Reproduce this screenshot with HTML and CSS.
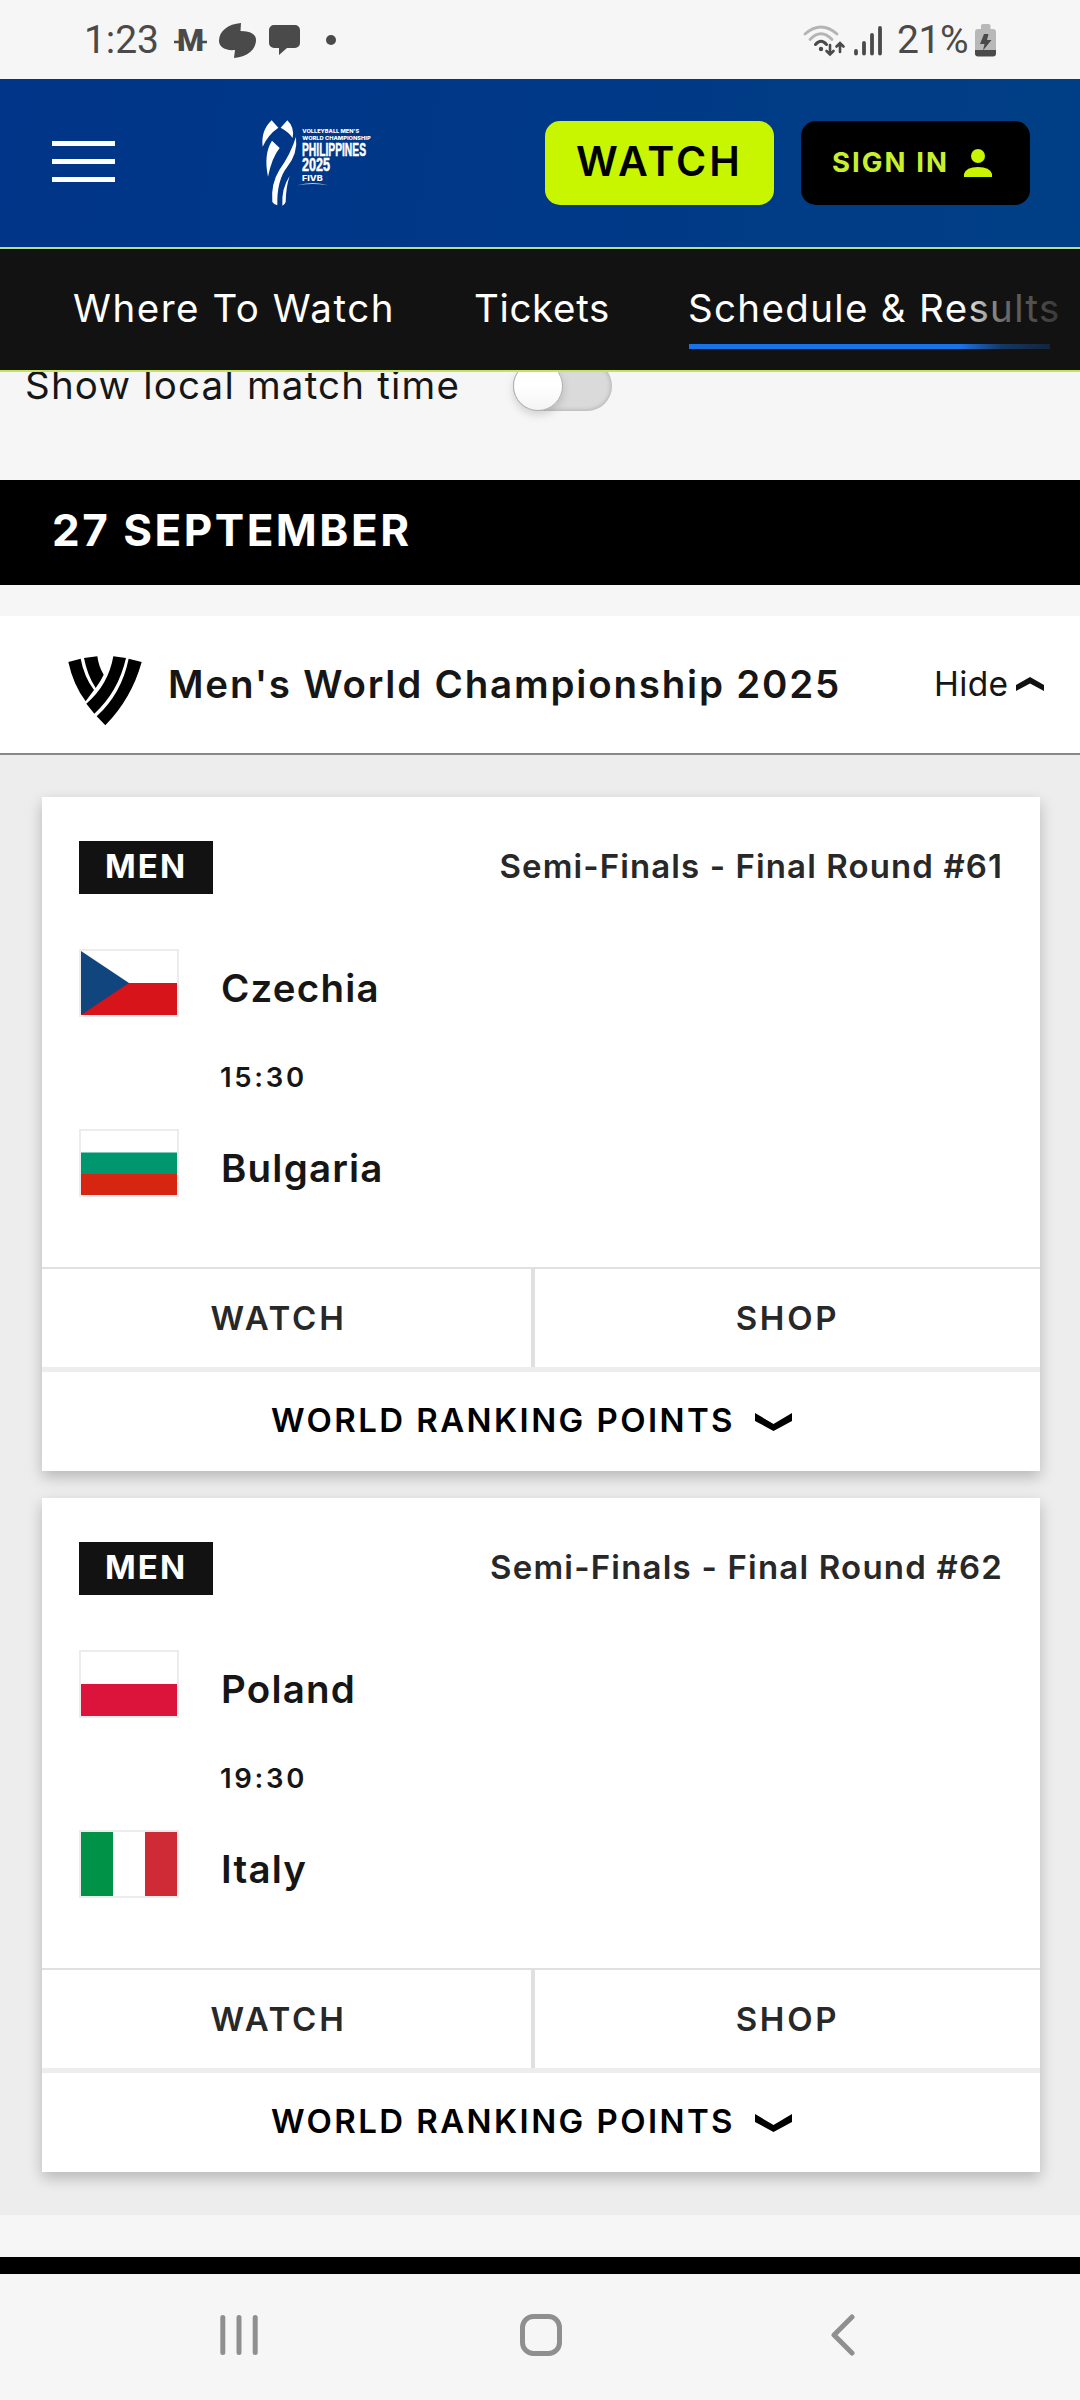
FILE: index.html
```html
<!DOCTYPE html>
<html lang="en">
<head>
<meta charset="utf-8">
<title>Schedule &amp; Results</title>
<link rel="stylesheet" href="styles.css">
</head>
<body>
<div class="status-bar">
  <span class="clock">1:23</span>
  <svg class="status-left" viewBox="172 15 170 48" width="170" height="48">
    <text x="177" y="50" class="mark-m" textLength="27" lengthAdjust="spacingAndGlyphs">M</text>
    <path d="M174 41h7M200 41h7" stroke="#4a4a4a" stroke-width="2.4"/>
    <g fill="#4a4a4a">
      <path d="M241 22 240.500 30C252 30 256 34 256 39C256 48 248 56 234 57L235 49C224 50 219 45 219 40C219 30 228 23 241 22Z"/>
      <path d="M274 24h21a5 5 0 0 1 5 5v13a5 5 0 0 1-5 5h-8l-8 7v-7h-5a5 5 0 0 1-5-5v-13a5 5 0 0 1 5-5Z"/>
      <circle cx="331" cy="39" r="5"/>
    </g>
  </svg>
  <svg class="status-signal" viewBox="800 15 90 48" width="90" height="48" fill="none" stroke-linecap="round">
    <path d="M805 33Q821 19 837 33M810 38.500Q821 27 832 38.500" stroke="#b4b4b4" stroke-width="2.800"/>
    <path d="M815.500 43.500Q821 37 826.500 43.500" stroke="#4a4a4a" stroke-width="3"/>
    <circle cx="821" cy="48" r="2.200" fill="#4a4a4a"/>
    <path d="M830 44V53M826.500 50 830 53.500 833.500 50M840 51V42.500M836.500 45.500 840 42 843.500 45.500" stroke="#4a4a4a" stroke-width="2.600"/>
    <path d="M856 50V52.500M864 42V52.500M872 34V52.500M880 27V52.500" stroke="#4a4a4a" stroke-width="3.800"/>
  </svg>
  <span class="battery-level">21%</span>
  <svg class="battery" viewBox="974 22 24 34" width="24" height="34">
    <path d="M981 28V24.500Q981 23 983 23H988.500Q990.500 23 990.500 24.500V28H993Q996 28 996 31V50H975V31Q975 28 978 28Z" fill="#b8b8b8"/>
    <path d="M975 49H996V52.500Q996 55.500 993 55.500H978Q975 55.500 975 52.500Z" fill="#4a4a4a"/>
    <path d="M984 33H988.500L987 39H991.500L983 49.500 984.500 43H980Z" fill="#4a4a4a"/>
  </svg>
</div>

<header class="site-header">
  <div class="menu"><i></i><i></i><i></i></div>
  <svg class="event-logo" viewBox="0 0 450 330" width="150" height="110" fill="#fff">
    <path d="M95 31 115 53Q84 74 68 110Q62 62 95 31Z"/>
    <path d="M142 31 122 53Q146 66 158 84Q164 52 142 31Z"/>
    <path d="M96 92 119 114Q96 142 84 200Q70 132 96 92Z"/>
    <path d="M168 80Q174 130 142 170Q110 210 112 286Q102 284 97 276Q92 222 118 180Q152 132 168 80Z"/>
    <path d="M149 198Q138 230 137 276Q134 285 127 287Q124 235 149 198Z"/>
    <text x="187" y="68" class="logo-wide" font-size="15" textLength="171" lengthAdjust="spacingAndGlyphs">VOLLEYBALL MEN'S</text>
    <text x="187" y="89" class="logo-wide" font-size="15" textLength="205" lengthAdjust="spacingAndGlyphs">WORLD CHAMPIONSHIP</text>
    <text x="186" y="137" class="logo-bold" textLength="192" lengthAdjust="spacingAndGlyphs">PHILIPPINES</text>
    <text x="186" y="183" class="logo-bold" textLength="84" lengthAdjust="spacingAndGlyphs">2025</text>
    <text x="186" y="214" class="logo-wide" font-size="22" textLength="62" lengthAdjust="spacingAndGlyphs">FIVB</text>
    <path d="M172 226Q218 214 265 226Q218 218 172 226Z"/>
  </svg>
  <a class="btn btn-watch">WATCH</a>
  <a class="btn btn-signin">SIGN IN
    <svg viewBox="0 0 28 28" width="28" height="28" fill="#c8f500"><circle cx="14" cy="7" r="7"/><path d="M0 28V25Q2 18 14 18Q26 18 28 25V28Z"/></svg>
  </a>
</header>

<nav class="tabs">
  <a class="tab tab-where">Where To Watch</a>
  <a class="tab tab-tickets">Tickets</a>
  <a class="tab tab-schedule">Schedule &amp; Results</a>
</nav>

<section class="local-time">
  <div class="local-row">
    <span>Show local match time</span>
    <div class="toggle"><i></i></div>
  </div>
</section>

<h2 class="day">27 SEPTEMBER</h2>

<div class="competition">
  <svg viewBox="0 0 270 300" width="90" height="100">
    <path d="M25 66 62 56Q72 110 102 150L77 184Q40 135 25 66Z"/>
    <path d="M72 54 112 49Q116 80 131 104Q122 124 107 144Q82 106 72 54Z"/>
    <path d="M160 49 198 54Q175 155 103 221L79 191Q145 135 160 49Z"/>
    <path d="M206 56 245 66Q215 175 136 256L110 229Q185 160 206 56Z"/>
  </svg>
  <h3>Men's World Championship 2025</h3>
  <a class="hide">Hide
    <svg viewBox="0 0 28 14" width="28" height="14"><path d="M0 8 14 0 28 8V14L14 6.500 0 14Z" fill="#111"/></svg>
  </a>
</div>

<main class="matches">
  <article class="card">
    <div class="card-top"><span class="badge">MEN</span><span class="round">Semi-Finals - Final Round #61</span></div>
    <div class="team"><svg class="flag" viewBox="0 0 96 64" width="96" height="64"><path fill="#fff" d="M0 0h96v64H0z"/><path fill="#d7141a" d="M0 32h96v32H0z"/><path fill="#11457e" d="M0 0 48 32 0 64z"/></svg><span>Czechia</span></div>
    <div class="time">15:30</div>
    <div class="team"><svg class="flag" viewBox="0 0 96 64" width="96" height="64"><path fill="#fff" d="M0 0h96v22H0z"/><path fill="#00966e" d="M0 21.500h96v21.500H0z"/><path fill="#d62612" d="M0 43h96v21H0z"/></svg><span>Bulgaria</span></div>
    <div class="actions"><a class="watch">WATCH</a><a>SHOP</a></div>
    <a class="ranking">WORLD RANKING POINTS
      <svg viewBox="0 0 37 18" width="37" height="18"><path d="M0 0 18.500 11 37 0V8L18.500 18 0 8Z"/></svg>
    </a>
  </article>
  <article class="card">
    <div class="card-top"><span class="badge">MEN</span><span class="round round-wide">Semi-Finals - Final Round #62</span></div>
    <div class="team"><svg class="flag" viewBox="0 0 96 64" width="96" height="64"><path fill="#fff" d="M0 0h96v32H0z"/><path fill="#dc143c" d="M0 32h96v32H0z"/></svg><span>Poland</span></div>
    <div class="time">19:30</div>
    <div class="team"><svg class="flag" viewBox="0 0 96 64" width="96" height="64"><path fill="#fff" d="M0 0h96v64H0z"/><path fill="#009246" d="M0 0h32v64H0z"/><path fill="#ce2b37" d="M64 0h32v64H64z"/></svg><span>Italy</span></div>
    <div class="actions"><a class="watch">WATCH</a><a>SHOP</a></div>
    <a class="ranking">WORLD RANKING POINTS
      <svg viewBox="0 0 37 18" width="37" height="18"><path d="M0 0 18.500 11 37 0V8L18.500 18 0 8Z"/></svg>
    </a>
  </article>
</main>
<div class="next-day"></div>

<footer class="system-nav">
  <svg viewBox="0 0 38 40" width="38" height="40"><path d="M2.800 2.500V37.500M19 2.500V37.500M35.200 2.500V37.500"/></svg>
  <svg viewBox="0 0 42 42" width="42" height="42"><rect x="2.500" y="2.500" width="37" height="37" rx="11"/></svg>
  <svg viewBox="0 0 24 42" width="24" height="42"><path d="M21 3 3 21 21 39"/></svg>
</footer>
</body>
</html>
```
FILE: styles.css
```css
* { box-sizing: border-box; margin: 0; padding: 0; }

body {
  width: 1080px;
  height: 2400px;
  overflow: hidden;
  background: #f6f6f6;
  color: #161616;
  font-family: Inter, "Liberation Sans", sans-serif;
}

svg { display: block; flex: none; }
a { color: inherit; text-decoration: none; white-space: nowrap; }

/* phone status bar */
.status-bar {
  display: flex;
  align-items: center;
  height: 79px;
  padding-left: 84px;
  font: 400 39px/78px Roboto, sans-serif;
  color: #4a4a4a;
}
.clock { width: 88px; letter-spacing: -0.1px; }
.status-left { margin-right: 458px; }
.battery-level { width: 84px; padding-left: 7px; letter-spacing: -0.4px; }
.mark-m { font: 900 31px Roboto, sans-serif; fill: #4a4a4a; }

/* site header */
.site-header {
  display: flex;
  align-items: center;
  height: 168px;
  padding-left: 52px;
  background: linear-gradient(100deg, #003589, #003a87 60%, #003f86);
}
.menu { display: flex; flex-direction: column; gap: 13px; width: 63px; margin-right: 125px; padding-bottom: 3px; }
.menu i { height: 5px; background: #fff; }
.event-logo { margin: 4px 155px 0 0; overflow: visible; }
.logo-wide { font-family: Inter, sans-serif; font-weight: 800; }
.logo-bold { font: 700 53px "Liberation Sans", sans-serif; stroke: #fff; stroke-width: 1.5px; }
.btn {
  display: flex;
  align-items: center;
  width: 229px;
  height: 84px;
  border-radius: 15px;
}
.btn-watch {
  padding: 0 0 4px 31px;
  margin-right: 27px;
  background: #c8f500;
  color: #000;
  font-size: 41px;
  font-weight: 600;
  letter-spacing: 3px;
}
.btn-signin {
  padding: 0 0 3px 31px;
  background: #000;
  color: #c9f02c;
  font-size: 27.5px;
  font-weight: 700;
  letter-spacing: 2.07px;
}
.btn-signin svg { margin: 3px 0 0 15px; }

/* section tabs */
.tabs {
  position: relative;
  display: flex;
  height: 125px;
  padding-left: 73px;
  border-top: 2px solid #b5e08a;
  border-bottom: 2px solid #c5e45a;
  background: #121212;
  overflow: hidden;
  color: #fff;
  font-size: 38.5px;
  line-height: 118px;
}
.tab { flex: none; }
.tab-where { width: 401px; letter-spacing: 1.53px; }
.tab-tickets { width: 215px; letter-spacing: 0.65px; }
.tab-schedule {
  width: 361px;
  letter-spacing: 1.33px;
  text-indent: -1px;
  background: linear-gradient(#1973e8, #1973e8) 0 95px / 361px 5px no-repeat;
}
.tabs::after {
  content: "";
  position: absolute;
  top: 0;
  right: 0;
  width: 120px;
  height: 121px;
  background: linear-gradient(90deg, rgba(18,18,18,0), rgba(18,18,18,.62) 35%, rgba(18,18,18,.85) 85%, #121212);
}

.local-time { height: 108px; overflow: hidden; }
.local-row {
  display: flex;
  align-items: center;
  height: 50px;
  margin-top: -11px;
  padding-left: 25px;
  font-size: 38.5px;
  letter-spacing: 1.2px;
}
.local-row span { width: 488px; line-height: 46px; padding-bottom: 3px; }
.toggle {
  width: 99px;
  height: 50px;
  border-radius: 25px;
  background: #dadada;
  box-shadow: inset 0 0 5px rgba(0,0,0,.25);
}
.toggle i {
  display: block;
  width: 50px;
  height: 50px;
  border: 1px solid #b0b0b0;
  border-radius: 25px;
  background: linear-gradient(#fff 50%, #f4f4f4);
  box-shadow: 0 4px 8px rgba(0,0,0,.15);
}

.day {
  height: 105px;
  padding-left: 52px;
  background: #000;
  color: #fff;
  font-size: 44px;
  font-weight: 700;
  line-height: 100px;
  letter-spacing: 2.5px;
}

.competition {
  display: flex;
  align-items: center;
  height: 139px;
  margin-top: 31px;
  padding-left: 60px;
  border-bottom: 2px solid #888;
  background: #fff;
}
.competition > svg { margin-top: 11px; }
.competition h3 {
  width: 784px;
  padding: 0 0 2px 18px;
  font-size: 38.5px;
  font-weight: 600;
  letter-spacing: 1.8px;
  white-space: nowrap;
}
.hide {
  display: flex;
  align-items: center;
  padding-bottom: 2px;
  font-size: 33.5px;
  letter-spacing: 0.33px;
}
.hide svg { margin-left: 8px; }

/* match list */
.matches {
  display: flex;
  flex-direction: column;
  gap: 27px;
  height: 1460px;
  padding: 42px 40px 0 42px;
  background: #ededed;
}
.card {
  height: 674px;
  background: #fff;
  box-shadow: 0 6px 14px rgba(0,0,0,.23);
}
.card-top {
  display: flex;
  justify-content: space-between;
  height: 152px;
  padding: 44px 37px 0;
  font-size: 33px;
}
.badge {
  width: 134px;
  height: 53px;
  padding-left: 26px;
  background: #121212;
  color: #fff;
  font-weight: 700;
  line-height: 50px;
  letter-spacing: 2.11px;
}
.round { color: #282828; font-weight: 600; line-height: 50px; letter-spacing: 1.1px; }
.round-wide { letter-spacing: 1.2px; }
.team {
  display: flex;
  height: 68px;
  padding-left: 37px;
  font-size: 38.5px;
  font-weight: 600;
  line-height: 78px;
  letter-spacing: 1.2px;
}
.flag { width: 100px; height: 68px; margin-right: 42px; border: 2px solid #ececec; }
.time {
  height: 112px;
  padding-left: 178px;
  font-size: 27.5px;
  font-weight: 600;
  line-height: 120px;
  letter-spacing: 2.7px;
}
.actions {
  display: flex;
  height: 105px;
  margin-top: 70px;
  border-top: 2px solid #e0e0e0;
  border-bottom: 5px solid #ededed;
  color: #282828;
  font-size: 33px;
  font-weight: 600;
  line-height: 98px;
  letter-spacing: 2.75px;
  text-align: center;
}
.actions a { flex: 1; }
.actions .watch { flex: 0 0 493px; padding-right: 16px; border-right: 4px solid #e0e0e0; }
.ranking {
  display: flex;
  align-items: center;
  height: 99px;
  padding: 0 0 3px 229px;
  color: #000;
  font-size: 33px;
  font-weight: 600;
  letter-spacing: 2.4px;
}
.ranking svg { margin: 4px 0 0 20px; }

.next-day { height: 17px; margin-top: 42px; background: #000; }

/* phone navigation bar */
.system-nav {
  display: flex;
  align-items: center;
  height: 122px;
  padding-left: 220px;
  fill: none;
  stroke: #8f8f8f;
  stroke-width: 5;
  stroke-linecap: round;
  stroke-linejoin: round;
}
.system-nav svg:nth-child(2) { margin: 0 269px 0 262px; }
```
